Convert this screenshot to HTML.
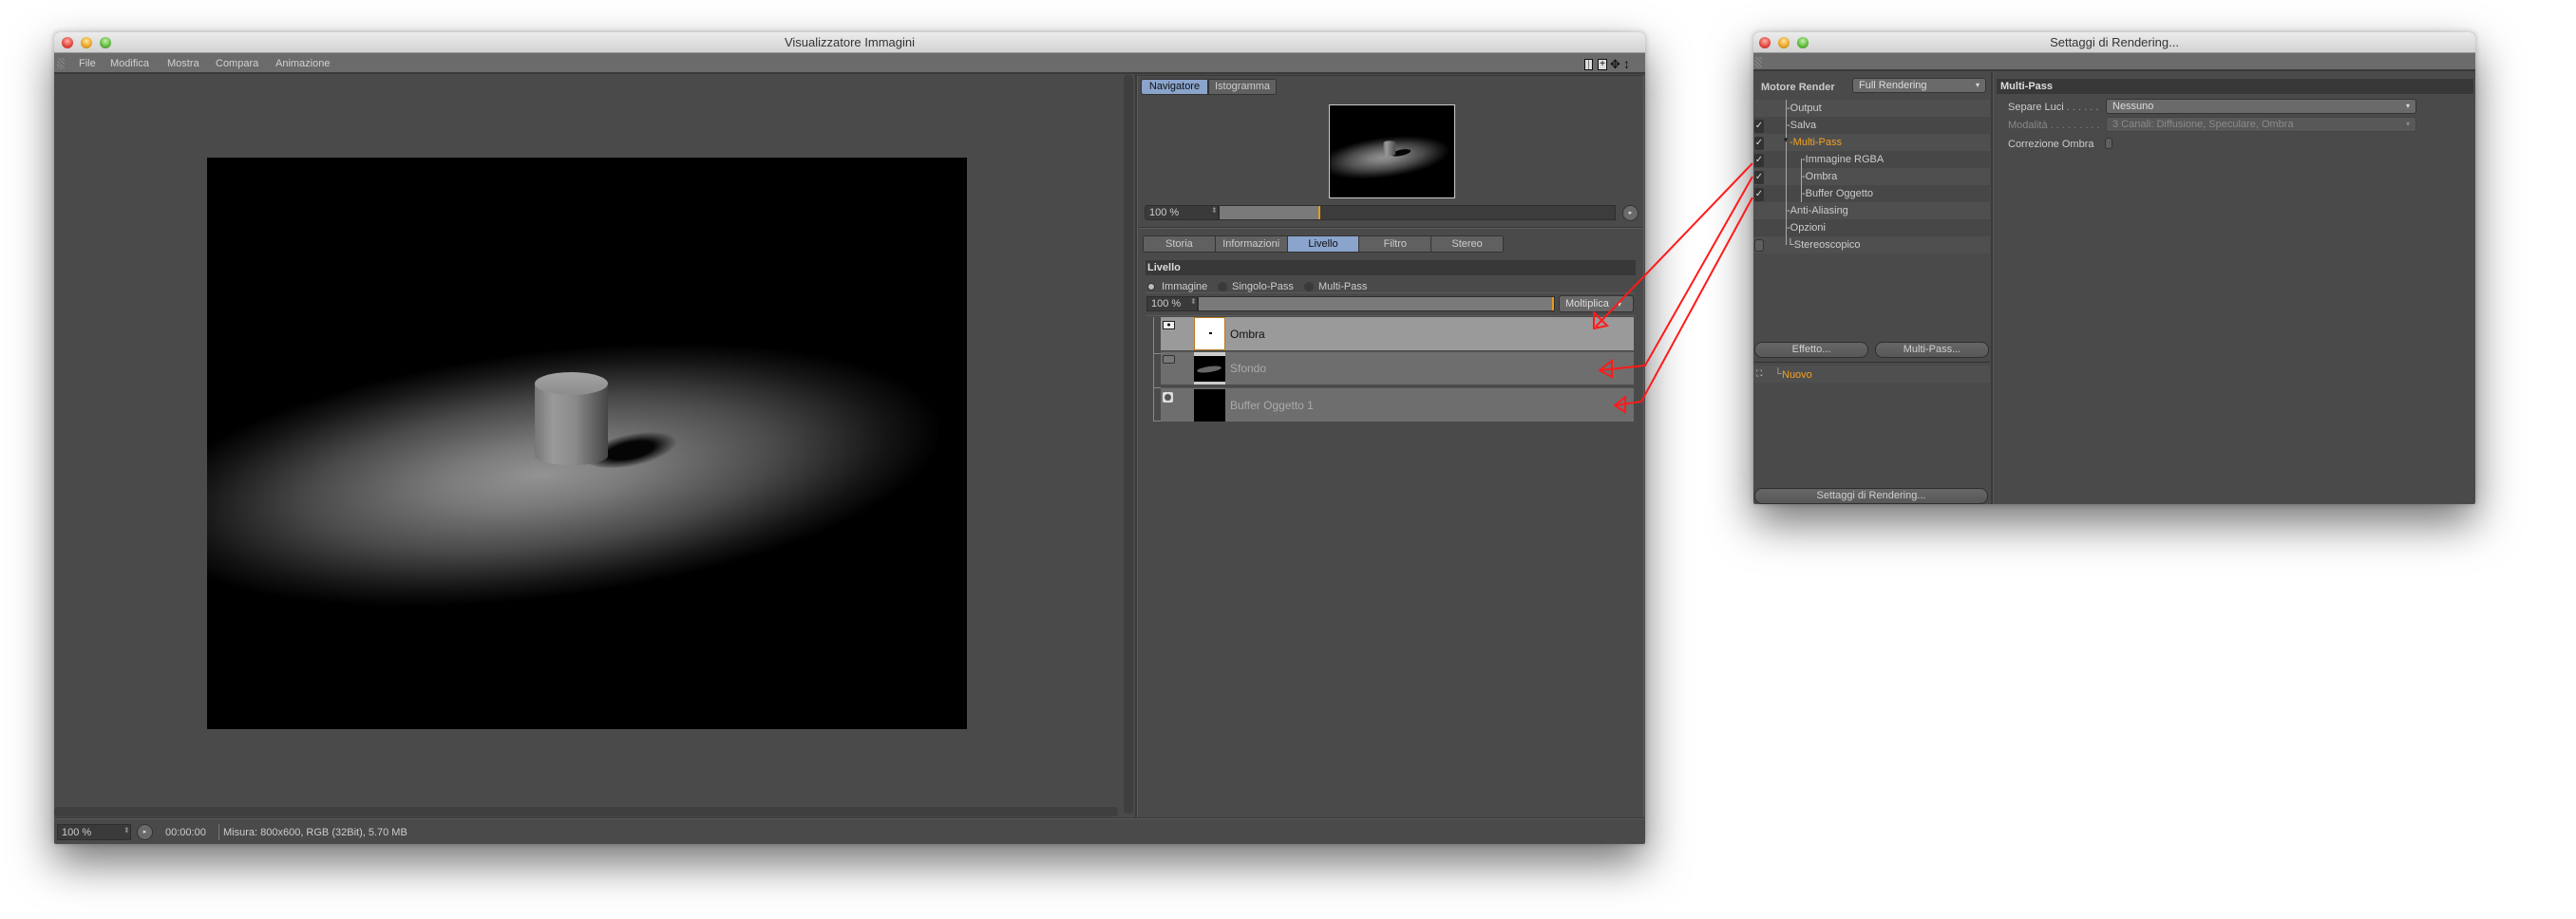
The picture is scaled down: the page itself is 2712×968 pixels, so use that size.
<!DOCTYPE html>
<html><head><meta charset="utf-8"><style>
*{margin:0;padding:0;box-sizing:border-box}
body{width:2712px;height:968px;background:#fff;position:relative;overflow:hidden;font-family:"Liberation Sans","DejaVu Sans",sans-serif;font-size:11px;color:#c8c8c8}
.a{position:absolute}
.win{position:absolute;background:#4a4a4a;box-shadow:0 20px 45px rgba(0,0,0,.55),0 0 6px rgba(0,0,0,.25);border-radius:5px 5px 2px 2px;overflow:hidden}
.tb{position:absolute;left:0;right:0;top:0;height:22px;background:linear-gradient(#ececec,#d2d2d2);border-bottom:1px solid #999;color:#333;font-size:13px;text-align:center;line-height:22px}
.dot{position:absolute;top:5px;width:12px;height:12px;border-radius:50%}
.r{background:radial-gradient(circle at 50% 35%,#ffb0a8,#e0443a 60%,#a52a22)}
.y{background:radial-gradient(circle at 50% 35%,#ffe6a0,#e8a422 60%,#a57016)}
.g{background:radial-gradient(circle at 50% 35%,#c8f0b0,#5cb83a 60%,#3a7c22)}
.grip{position:absolute;width:8px;height:12px;background:repeating-linear-gradient(45deg,#888 0 1px,transparent 1px 3px)}
.txt{position:absolute;white-space:nowrap;line-height:1}
.btn{position:absolute;background:linear-gradient(#666,#585858);border:1px solid #2e2e2e;border-radius:8px;color:#cfcfcf;text-align:center;font-size:11px}
.scene{position:absolute;left:0;top:0;width:800px;height:602px;background:#000;overflow:hidden}
</style></head><body>

<div class="win" style="left:57px;top:34px;width:1675px;height:855px">
 <div class="tb">Visualizzatore Immagini
  <div class="dot r" style="left:8px"></div><div class="dot y" style="left:28px"></div><div class="dot g" style="left:48px"></div>
 </div>
 <div class="a" style="left:0;top:22px;width:1675px;height:22px;background:#6b6b6b;border-bottom:2px solid #3a3a3a"></div>
 <div class="grip" style="left:3px;top:27px"></div>
 <div class="txt" style="left:26px;top:28px;color:#d0d0d0">File</div>
 <div class="txt" style="left:59px;top:28px;color:#d0d0d0">Modifica</div>
 <div class="txt" style="left:119px;top:28px;color:#d0d0d0">Mostra</div>
 <div class="txt" style="left:170px;top:28px;color:#d0d0d0">Compara</div>
 <div class="txt" style="left:233px;top:28px;color:#d0d0d0">Animazione</div>
 <div class="a" style="left:1611px;top:28px;width:9px;height:12px;border:1px solid #111;background:linear-gradient(90deg,#ddd 50%,#222 50%,#222 60%,#ddd 60%)"></div>
 <div class="a" style="left:1625px;top:28px;width:10px;height:12px;border:1px solid #111;background:#ddd;color:#000;font-size:10px;line-height:9px;text-align:center">+</div>
 <div class="txt" style="left:1638px;top:27px;color:#111;font-size:13px">✥</div>
 <div class="txt" style="left:1652px;top:26px;color:#111;font-size:14px;font-weight:bold">↕</div>

 <div class="scene" style="left:161px;top:132px">
  <div class="a" style="left:-70px;top:200px;width:920px;height:270px;transform:rotate(-7deg);background:radial-gradient(ellipse closest-side at 46% 48%,#939393 0%,#7a7a7a 25%,#4a4a4a 58%,#151515 86%,#000 100%)"></div>
  <div class="a" style="left:395px;top:285px;width:125px;height:38px;border-radius:50%;transform:rotate(-12deg);background:radial-gradient(ellipse closest-side at 40% 55%,#050505 50%,rgba(0,0,0,0) 100%)"></div>
  <div class="a" style="left:345px;top:238px;width:77px;height:86px;border-radius:0 0 38px 38px/0 0 10px 10px;background:linear-gradient(90deg,#777 0%,#9a9a9a 25%,#8a8a8a 55%,#555 90%,#444 100%)"></div>
  <div class="a" style="left:345px;top:226px;width:77px;height:24px;border-radius:50%;background:linear-gradient(#a4a4a4,#8d8d8d)"></div>
 </div>
 <div class="a" style="left:1126px;top:45px;width:10px;height:778px;background:#3f3f3f;border-radius:4px"></div>
 <div class="a" style="left:0;top:816px;width:1120px;height:10px;background:#3f3f3f;border-radius:4px"></div>
 <div class="a" style="left:1138px;top:44px;width:2px;height:785px;background:#3a3a3a"></div>

 <div class="a" style="left:1140px;top:45px;width:534px;height:784px;border:1px solid #5c5c5c;border-top:1px solid #3a3a3a"></div>
 <div class="a" style="left:1144px;top:49px;width:71px;height:17px;background:#8aa4cc;border:1px solid #333;color:#111;line-height:15px;text-align:center;border-radius:3px 0 0 3px">Navigatore</div>
 <div class="a" style="left:1215px;top:49px;width:72px;height:17px;background:#606060;border:1px solid #333;color:#ccc;line-height:15px;text-align:center;border-radius:0 3px 3px 0">Istogramma</div>
 <div class="a" style="left:1342px;top:76px;width:133px;height:99px;border:1px solid #ccc;overflow:hidden;background:#000">
  <div style="position:absolute;left:0;top:0;width:800px;height:602px;transform:scale(0.164);transform-origin:0 0">
   <div class="scene">
    <div class="a" style="left:-70px;top:200px;width:920px;height:270px;transform:rotate(-7deg);background:radial-gradient(ellipse closest-side at 46% 48%,#939393 0%,#7a7a7a 25%,#4a4a4a 58%,#151515 86%,#000 100%)"></div>
    <div class="a" style="left:395px;top:285px;width:125px;height:38px;border-radius:50%;transform:rotate(-12deg);background:#050505"></div>
    <div class="a" style="left:345px;top:228px;width:77px;height:96px;border-radius:38px/12px;background:linear-gradient(90deg,#777,#9a9a9a 25%,#555 90%)"></div>
   </div>
  </div>
 </div>
 <div class="a" style="left:1148px;top:182px;width:78px;height:16px;background:#3a3a3a;border:1px solid #2e2e2e;border-radius:3px 0 0 3px"></div>
 <div class="txt" style="left:1153px;top:185px;color:#ccc">100 %</div>
 <div class="txt" style="left:1218px;top:184px;color:#888;font-size:8px">⬍</div>
 <div class="a" style="left:1226px;top:182px;width:418px;height:16px;background:#3c3c3c;border:1px solid #2e2e2e"></div>
 <div class="a" style="left:1227px;top:183px;width:104px;height:14px;background:#7a7a7a"></div>
 <div class="a" style="left:1331px;top:183px;width:2px;height:14px;background:#e69a20"></div>
 <div class="a" style="left:1651px;top:182px;width:17px;height:17px;border-radius:50%;background:#6a6a6a;border:1px solid #333;color:#ddd;font-size:7px;line-height:15px;text-align:center">▸</div>
 <div class="a" style="left:1141px;top:205px;width:532px;height:2px;background:#3a3a3a;border-bottom:1px solid #5a5a5a"></div>
 <div class="a" style="left:1146px;top:214px;width:380px;height:18px;border:1px solid #333;border-radius:3px;display:flex;overflow:hidden">
  <div style="flex:1;background:#606060;color:#ccc;text-align:center;line-height:16px;border-right:1px solid #333">Storia</div>
  <div style="flex:1;background:#606060;color:#ccc;text-align:center;line-height:16px;border-right:1px solid #333">Informazioni</div>
  <div style="flex:1;background:#8aa4cc;color:#111;text-align:center;line-height:16px;border-right:1px solid #333">Livello</div>
  <div style="flex:1;background:#606060;color:#ccc;text-align:center;line-height:16px;border-right:1px solid #333">Filtro</div>
  <div style="flex:1;background:#606060;color:#ccc;text-align:center;line-height:16px">Stereo</div>
 </div>
 <div class="a" style="left:1149px;top:240px;width:516px;height:16px;background:#383838"></div>
 <div class="txt" style="left:1151px;top:243px;color:#ddd;font-weight:bold">Livello</div>
 <div class="a" style="left:1151px;top:264px;width:8px;height:8px;border-radius:50%;background:#bbb;border:1px solid #333"></div>
 <div class="txt" style="left:1166px;top:263px;color:#ccc">Immagine</div>
 <div class="a" style="left:1225px;top:263px;width:10px;height:10px;border-radius:50%;background:#3a3a3a"></div>
 <div class="txt" style="left:1240px;top:263px;color:#ccc">Singolo-Pass</div>
 <div class="a" style="left:1316px;top:263px;width:10px;height:10px;border-radius:50%;background:#3a3a3a"></div>
 <div class="txt" style="left:1331px;top:263px;color:#ccc">Multi-Pass</div>
 <div class="a" style="left:1149px;top:274px;width:516px;height:1px;background:#5a5a5a"></div>
 <div class="a" style="left:1150px;top:278px;width:54px;height:16px;background:#3a3a3a;border:1px solid #2e2e2e"></div>
 <div class="txt" style="left:1155px;top:281px;color:#ccc">100 %</div>
 <div class="txt" style="left:1196px;top:280px;color:#888;font-size:8px">⬍</div>
 <div class="a" style="left:1204px;top:278px;width:376px;height:16px;background:#7a7a7a;border:1px solid #2e2e2e"></div>
 <div class="a" style="left:1577px;top:279px;width:2px;height:14px;background:#e69a20"></div>
 <div class="a" style="left:1584px;top:277px;width:79px;height:18px;background:#686868;border:1px solid #333;border-radius:3px;color:#ddd;line-height:16px;padding-left:6px">Moltiplica <span style="font-size:8px;margin-left:6px">▾</span></div>
 <div class="a" style="left:1149px;top:298px;width:516px;height:1px;background:#5a5a5a"></div>
 <div class="a" style="left:1157px;top:300px;width:1px;height:110px;background:#888"></div>
 <div class="a" style="left:1157px;top:338px;width:8px;height:1px;background:#888"></div>
 <div class="a" style="left:1157px;top:374px;width:8px;height:1px;background:#888"></div>
 <div class="a" style="left:1157px;top:409px;width:8px;height:1px;background:#888"></div>
 <div class="a" style="left:1165px;top:300px;width:498px;height:35px;background:#9a9a9a"></div>
 <div class="a" style="left:1165px;top:336px;width:498px;height:35px;background:#6e6e6e;border-top:1px solid #555"></div>
 <div class="a" style="left:1165px;top:374px;width:498px;height:36px;background:#6e6e6e;border-top:1px solid #555"></div>
 <div class="a" style="left:1167px;top:304px;width:13px;height:9px;background:#eee;border:1px solid #222;color:#000;font-size:7px;line-height:7px;text-align:center">●</div>
 <div class="a" style="left:1167px;top:340px;width:13px;height:9px;background:#777;border:1px solid #333;border-radius:2px"></div>
 <div class="a" style="left:1167px;top:379px;width:11px;height:11px;background:#ddd;border-radius:2px"><div style="margin:2px;width:7px;height:7px;border-radius:50%;background:#555"></div></div>
 <div class="a" style="left:1200px;top:300px;width:33px;height:35px;background:#fff;border:1px solid #b87a20"><div style="position:absolute;left:15px;top:15px;width:3px;height:2px;background:#000"></div></div>
 <div class="a" style="left:1200px;top:337px;width:33px;height:34px;background:#000;border-top:4px solid #ccc;border-bottom:3px solid #ccc"><div style="position:absolute;left:3px;top:11px;width:26px;height:6px;border-radius:50%;background:#666;transform:rotate(-8deg)"></div></div>
 <div class="a" style="left:1200px;top:376px;width:33px;height:34px;background:#000"></div>
 <div class="txt" style="left:1238px;top:312px;color:#111;font-size:12px">Ombra</div>
 <div class="txt" style="left:1238px;top:348px;color:#aaa;font-size:12px">Sfondo</div>
 <div class="txt" style="left:1238px;top:387px;color:#aaa;font-size:12px">Buffer Oggetto 1</div>

 <div class="a" style="left:0;top:827px;width:1675px;height:2px;background:#3a3a3a;border-bottom:1px solid #5a5a5a"></div>
 <div class="a" style="left:3px;top:834px;width:78px;height:17px;background:#3a3a3a;border:1px solid #2e2e2e"></div>
 <div class="txt" style="left:8px;top:838px;color:#ccc">100 %</div>
 <div class="txt" style="left:73px;top:837px;color:#888;font-size:8px">⬍</div>
 <div class="a" style="left:87px;top:834px;width:17px;height:17px;border-radius:50%;background:#6a6a6a;border:1px solid #333;color:#ddd;font-size:7px;line-height:15px;text-align:center">▸</div>
 <div class="txt" style="left:117px;top:838px;color:#ccc">00:00:00</div>
 <div class="a" style="left:173px;top:834px;width:1px;height:17px;background:#777"></div>
 <div class="txt" style="left:178px;top:838px;color:#ccc">Misura: 800x600, RGB (32Bit), 5.70 MB</div>
</div>

<div class="win" style="left:1846px;top:34px;width:760px;height:497px">
 <div class="tb">Settaggi di Rendering...
  <div class="dot r" style="left:6px"></div><div class="dot y" style="left:26px"></div><div class="dot g" style="left:46px"></div>
 </div>
 <div class="a" style="left:0;top:22px;width:760px;height:19px;background:#6b6b6b;border-bottom:2px solid #3a3a3a"></div>
 <div class="grip" style="left:1px;top:26px"></div>
 <div class="txt" style="left:8px;top:53px;color:#ccc;font-weight:bold">Motore Render</div>
 <div class="a" style="left:104px;top:48px;width:141px;height:16px;background:#6a6a6a;border:1px solid #333;border-radius:3px;color:#ddd;line-height:14px;padding-left:6px">Full Rendering<span style="position:absolute;right:6px;font-size:8px">▾</span></div>
 <div class="a" style="left:0;top:71px;width:249px;height:162px;background:repeating-linear-gradient(#4f4f4f 0 18px,#474747 18px 36px)"></div>
 <div class="a" style="left:34px;top:71px;width:1px;height:153px;background:#aaa"></div>
 <div class="a" style="left:50px;top:133px;width:1px;height:46px;background:#aaa"></div>
 <div class="txt" style="left:35px;top:75px;color:#ccc">-Output</div>
 <div class="txt" style="left:35px;top:93px;color:#ccc">-Salva</div>
 <div class="txt" style="left:30px;top:110px;color:#222;font-size:8px">▼</div>
 <div class="txt" style="left:38px;top:111px;color:#f5a020">-Multi-Pass</div>
 <div class="txt" style="left:51px;top:129px;color:#ccc">-Immagine RGBA</div>
 <div class="txt" style="left:51px;top:147px;color:#ccc">-Ombra</div>
 <div class="txt" style="left:51px;top:165px;color:#ccc">-Buffer Oggetto</div>
 <div class="txt" style="left:35px;top:183px;color:#ccc">-Anti-Aliasing</div>
 <div class="txt" style="left:35px;top:201px;color:#ccc">-Opzioni</div>
 <div class="txt" style="left:35px;top:219px;color:#ccc">└Stereoscopico</div>
 <div class="a" style="left:1px;top:92px;width:10px;height:14px;background:#333;border-radius:2px;color:#ddd;font-size:10px;line-height:14px;text-align:center">✓</div>
 <div class="a" style="left:1px;top:110px;width:10px;height:14px;background:#333;border-radius:2px;color:#ddd;font-size:10px;line-height:14px;text-align:center">✓</div>
 <div class="a" style="left:1px;top:128px;width:10px;height:14px;background:#333;border-radius:2px;color:#ddd;font-size:10px;line-height:14px;text-align:center">✓</div>
 <div class="a" style="left:1px;top:146px;width:10px;height:14px;background:#333;border-radius:2px;color:#ddd;font-size:10px;line-height:14px;text-align:center">✓</div>
 <div class="a" style="left:1px;top:164px;width:10px;height:14px;background:#333;border-radius:2px;color:#ddd;font-size:10px;line-height:14px;text-align:center">✓</div>
 <div class="a" style="left:1px;top:218px;width:10px;height:13px;background:#5e5e5e;border:1px solid #333;border-radius:3px"></div>
 <div class="a" style="left:250px;top:42px;width:3px;height:455px;background:#3a3a3a;border-right:1px solid #555"></div>
 <div class="btn" style="left:1px;top:326px;width:120px;height:17px;line-height:15px">Effetto...</div>
 <div class="btn" style="left:128px;top:326px;width:120px;height:17px;line-height:15px">Multi-Pass...</div>
 <div class="a" style="left:0;top:347px;width:249px;height:1px;background:#333"></div>
 <div class="a" style="left:0;top:351px;width:249px;height:18px;background:#4f4f4f"></div>
 <div class="txt" style="left:3px;top:355px;color:#ddd;font-size:9px">⛶</div>
 <div class="txt" style="left:22px;top:355px;color:#aaa">└</div>
 <div class="txt" style="left:30px;top:356px;color:#f5a020">Nuovo</div>
 <div class="btn" style="left:1px;top:480px;width:246px;height:17px;line-height:15px">Settaggi di Rendering...</div>
 <div class="a" style="left:256px;top:49px;width:502px;height:16px;background:#383838"></div>
 <div class="txt" style="left:260px;top:52px;color:#ddd;font-weight:bold">Multi-Pass</div>
 <div class="txt" style="left:268px;top:74px;color:#ccc">Separe Luci <span style="color:#999">. . . . . .</span></div>
 <div class="a" style="left:371px;top:70px;width:327px;height:16px;background:#6a6a6a;border:1px solid #333;border-radius:3px;color:#ddd;line-height:14px;padding-left:6px">Nessuno<span style="position:absolute;right:6px;font-size:8px">▾</span></div>
 <div class="txt" style="left:268px;top:93px;color:#888">Modalità <span>. . . . . . . . .</span></div>
 <div class="a" style="left:371px;top:89px;width:327px;height:16px;background:#585858;border:1px solid #444;border-radius:3px;color:#8a8a8a;line-height:14px;padding-left:6px">3 Canali: Diffusione, Speculare, Ombra<span style="position:absolute;right:6px;font-size:8px">▾</span></div>
 <div class="txt" style="left:268px;top:113px;color:#ccc">Correzione Ombra</div>
 <div class="a" style="left:370px;top:111px;width:8px;height:12px;background:#5e5e5e;border:1px solid #333;border-radius:3px"></div>
</div>

<svg class="a" style="left:0;top:0" width="2712" height="968" viewBox="0 0 2712 968">
 <g fill="none" stroke="#ff1a1a" stroke-width="2" stroke-linejoin="miter">
  <path d="M1845 172 L1680 344"/>
  <path d="M1678 346 L1678 329 L1692 343 Z"/>
  <path d="M1845 186 L1732 385 L1684 390"/>
  <path d="M1684 390 L1697 380 L1697 397 Z"/>
  <path d="M1845 208 L1728 423 L1700 427"/>
  <path d="M1700 427 L1711 418 L1711 434 Z"/>
 </g>
</svg>
</body></html>
